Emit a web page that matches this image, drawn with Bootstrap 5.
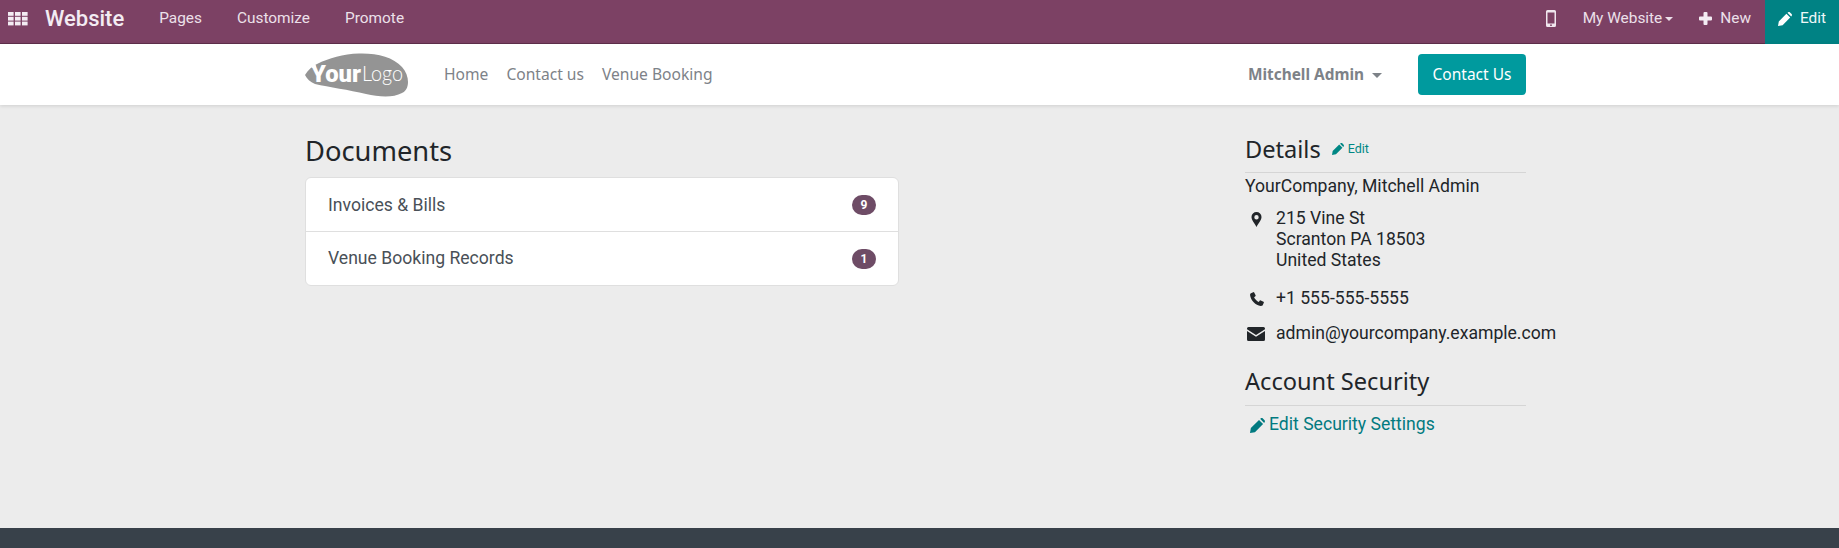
<!DOCTYPE html>
<html lang="en">
<head>
<meta charset="utf-8">
<title>Documents</title>
<link href="https://cdn.jsdelivr.net/npm/bootstrap@5.3.0/dist/css/bootstrap.min.css" rel="stylesheet">
<style>
html,body{height:548px;overflow:hidden}
body{background:#ececec;font-family:Roboto,sans-serif;font-size:17.6px;color:#212529;display:flex;flex-direction:column}
.topbar{height:44px;background:#7c4164;border-bottom:1px solid #5f2f4c;color:#f0e6ee;font-size:15.4px;flex:none}
.topbar a{color:#ece0ea;text-decoration:none}
.topgroup{padding-bottom:6px}
.appgrid{width:20px;margin-left:8px;margin-right:17px}
.topbar a.brandname{font-size:22px;font-weight:500;color:#f3ecf3;margin-right:35px}
.topitem{margin-right:35px}
.phoneicon{margin-right:27px}
.topbar a.sitepick{margin-right:26px}
.topbar a.newlink{margin-right:14px}
.plusicon{margin-right:8px}
.topbar a.editbtn{background:#008284;width:74px;height:44px;color:#eef8f8;padding-bottom:6px}
.penicon{margin-right:8px}
.smallcaret{display:inline-block;width:0;height:0;border-left:4px solid transparent;border-right:4px solid transparent;border-top:4px solid currentColor;vertical-align:middle;margin-left:3px}
.sitehead{height:61px;background:#fff;box-shadow:0 1px 4px rgba(0,0,0,.13);flex:none;position:relative}
.wrapin{width:1221px;margin-left:305px}
.sitenav{gap:18px;margin-left:34px}
.sitenav a{font-family:"Noto Sans",sans-serif;color:#7d8288;text-decoration:none;font-size:15.6px}
.usermenu{font-family:"Noto Sans",sans-serif;font-weight:700;font-size:15.4px;color:#7d8288;margin-right:36px}
.caretdown{display:inline-block;width:0;height:0;border-left:5px solid transparent;border-right:5px solid transparent;border-top:5px solid currentColor;vertical-align:middle;margin-left:8px}
.ctabtn{background:#009a9e;color:#fff;border:0;border-radius:4px;height:41px;width:108px;font-family:"Noto Sans",sans-serif;font-size:15.5px;padding:0;line-height:41px;text-align:center;text-decoration:none}
.mainarea{flex:1 1 auto}
.leftcol{width:594px}
.rightcol{width:281px}
.headline{font-family:"Noto Sans",sans-serif;font-weight:400;color:#212529;margin:0}
.headdocs{font-size:27.3px;line-height:32px;margin-top:30px;margin-bottom:10px}
.doclist{border-radius:6px;border:1px solid #dfdfdf;background:#fff;font-size:17.6px}
.docitem{height:54px;padding:0 22px;color:#495057;text-decoration:none;border-bottom:1px solid #dfdfdf}
.docitem:last-child{border-bottom:0;height:53px}
.doclabel{padding-top:1px}
.countpill{background:#6e4c66;color:#fff;font-size:12px;font-weight:700;border-radius:10px;width:24px;height:20px;text-align:center;line-height:20px}
.dethead{border-bottom:1px solid #d5d5d5;height:46px;margin-top:22px;padding-bottom:1px}
.dethead2{border-bottom:1px solid #d5d5d5;height:42px;margin-top:20px;padding-bottom:7px}
.headsmall{font-size:23.6px;line-height:34px}
.tinyedit{font-size:12.5px;color:#008784;text-decoration:none;margin-left:11px}
.infolines{line-height:21px}
.companyline{margin-top:3px}
.addrline{margin-top:11px}
.phoneline{margin-top:17px}
.mailline{margin-top:14px}
.infoicon{width:31px;flex:none;padding-left:6px}
.infoicon.wideicon{padding-left:2px}
.infoicon.midicon{padding-left:5px}
.secedit{color:#017a80;text-decoration:none;line-height:21px;margin-top:8px}
.secicon{margin-left:5px;margin-right:4px}
.footband{height:20px;background:#38414a;flex:none}
</style>
</head>
<body>
<div class="topbar d-flex justify-content-between">
  <div class="d-flex align-items-center topgroup">
    <svg class="appgrid" viewBox="0 0 20 15" height="15" aria-hidden="true"><g fill="#f3ecf3"><rect x="0" y="1" width="5.600" height="3.800"/><rect x="7" y="1" width="5.600" height="3.800"/><rect x="14" y="1" width="5.600" height="3.800"/><rect x="0" y="5.800" width="5.600" height="3.800"/><rect x="7" y="5.800" width="5.600" height="3.800"/><rect x="14" y="5.800" width="5.600" height="3.800"/><rect x="0" y="10.600" width="5.600" height="3.800"/><rect x="7" y="10.600" width="5.600" height="3.800"/><rect x="14" y="10.600" width="5.600" height="3.800"/></g></svg>
    <a class="brandname" href="#">Website</a>
    <a class="topitem" href="#">Pages</a>
    <a class="topitem" href="#">Customize</a>
    <a class="topitem" href="#">Promote</a>
  </div>
  <div class="d-flex">
    <div class="d-flex align-items-center topgroup">
      <svg class="phoneicon" width="10" height="17" viewBox="0 0 10 17" aria-hidden="true"><path fill="#f0e6ee" fill-rule="evenodd" d="M1.500 0h7A1.500 1.500 0 0 1 10 1.500v14A1.500 1.500 0 0 1 8.500 17h-7A1.500 1.500 0 0 1 0 15.500v-14A1.500 1.500 0 0 1 1.500 0zM1.500 2.500v11h7v-11zM5 14.300a.9.9 0 1 0 0 1.800.9.9 0 0 0 0-1.800z"/></svg>
      <a href="#" class="sitepick">My Website<span class="smallcaret"></span></a>
      <a href="#" class="newlink d-flex align-items-center"><svg class="plusicon" width="13" height="13" viewBox="0 0 13 13" aria-hidden="true"><path fill="#f3ecf3" d="M4.500 1a1 1 0 0 1 1-1h2a1 1 0 0 1 1 1v3.500H12a1 1 0 0 1 1 1v2a1 1 0 0 1-1 1H8.500V12a1 1 0 0 1-1 1h-2a1 1 0 0 1-1-1V8.500H1a1 1 0 0 1-1-1v-2a1 1 0 0 1 1-1h3.500z"/></svg>New</a>
    </div>
    <a href="#" class="editbtn d-flex align-items-center justify-content-center"><svg class="penicon" width="14" height="14" viewBox="0 0 14 14" aria-hidden="true"><path fill="#fff" d="M0 14l.8-4.600L8.400 1.800l3.800 3.800-7.600 7.600zM9.400.8l.6-.4c.6-.5 1.400-.5 2 0L13.600 2c.5.600.5 1.400 0 2l-.4.600z"/></svg>Edit</a>
  </div>
</div>
<header class="sitehead d-flex align-items-center">
  <div class="wrapin d-flex align-items-center">
    <svg width="105" height="44" viewBox="0 0 105 44" aria-hidden="true"><path fill="#949494" d="M0 22C3 17 7 13 12 11 24 5 38 1 54 .5 72 0 88 4 97 14c8 9 8 22 0 26-9 5-23 4-36 1C44 37 24 34 10 31 5 29 2 26 0 22z"/><path fill="#fff" d="M3 9l7 1 1 4-4 1z"/><text x="6" y="29" fill="#fff" font-family="Roboto,sans-serif" font-weight="900" font-size="23" textLength="50" lengthAdjust="spacingAndGlyphs">Your</text><text x="57" y="28" fill="#fff" font-family="Lato,sans-serif" font-weight="300" font-size="22" textLength="41" lengthAdjust="spacingAndGlyphs">Logo</text></svg>
    <nav class="sitenav d-flex flex-grow-1"><a href="#">Home</a><a href="#">Contact us</a><a href="#">Venue Booking</a></nav>
    <span class="usermenu">Mitchell Admin<span class="caretdown"></span></span>
    <a class="ctabtn" href="#">Contact Us</a>
  </div>
</header>
<main class="mainarea">
  <div class="wrapin d-flex justify-content-between">
    <div class="leftcol">
      <h3 class="headline headdocs">Documents</h3>
      <div class="doclist list-group">
        <a href="#" class="docitem d-flex align-items-center justify-content-between"><span class="doclabel">Invoices &amp; Bills</span><span class="countpill">9</span></a>
        <a href="#" class="docitem d-flex align-items-center justify-content-between"><span>Venue Booking Records</span><span class="countpill">1</span></a>
      </div>
    </div>
    <div class="rightcol">
      <div class="dethead d-flex align-items-center"><h4 class="headline headsmall">Details</h4><a class="tinyedit" href="#"><svg width="12" height="12" viewBox="0 0 14 14" aria-hidden="true" class="me-1"><path fill="#008784" d="M0 14l.8-4.600L8.400 1.800l3.800 3.800-7.600 7.600zM9.400.8l.6-.4c.6-.5 1.400-.5 2 0L13.600 2c.5.600.5 1.400 0 2l-.4.600z"/></svg>Edit</a></div>
      <div class="infolines companyline">YourCompany, Mitchell Admin</div>
      <div class="d-flex infolines addrline"><span class="infoicon"><svg width="11" height="15" viewBox="0 0 10 15" aria-hidden="true"><path fill="#212529" fill-rule="evenodd" d="M5 0a5 5 0 0 1 5 5c0 3-3.500 7-5 10C3.500 12 0 8 0 5a5 5 0 0 1 5-5zm0 3a2.200 2.200 0 1 0 0 4.400A2.200 2.200 0 0 0 5 3z"/></svg></span><div>215 Vine St<br>Scranton PA 18503<br>United States</div></div>
      <div class="d-flex infolines phoneline"><span class="infoicon midicon"><svg width="14" height="14" viewBox="0 0 14 14" aria-hidden="true"><path fill="#212529" d="M3.200.2 1 1.200C.2 1.600 0 2.500.1 3.300c.5 5 5.600 10.200 10.600 10.600.8.100 1.700-.1 2.100-.9l1-2.200a.8.8 0 0 0-.3-1L10.800 8.400a.8.8 0 0 0-1 .2l-1 1.300C7 9.100 4.900 7 4.100 5.200l1.300-1a.8.8 0 0 0 .2-1L4.200.5a.8.8 0 0 0-1-.3z"/></svg></span><div>+1 555-555-5555</div></div>
      <div class="d-flex infolines mailline text-nowrap"><span class="infoicon wideicon"><svg width="18" height="14" viewBox="0 0 18 14" aria-hidden="true"><path fill="#212529" d="M1.500 0h15A1.500 1.500 0 0 1 18 1.500v.7L9 8 0 2.200v-.7A1.500 1.500 0 0 1 1.500 0zM0 4l9 5.800L18 4v8.500a1.500 1.500 0 0 1-1.500 1.500h-15A1.500 1.500 0 0 1 0 12.500z"/></svg></span><div>admin@yourcompany.example.com</div></div>
      <div class="dethead2 d-flex align-items-center"><h4 class="headline headsmall">Account Security</h4></div>
      <a class="secedit d-block" href="#"><svg class="secicon" width="15" height="15" viewBox="0 0 14 14" aria-hidden="true"><path fill="#017a80" d="M0 14l.8-4.600L8.400 1.800l3.800 3.800-7.600 7.600zM9.400.8l.6-.4c.6-.5 1.400-.5 2 0L13.600 2c.5.600.5 1.400 0 2l-.4.600z"/></svg>Edit Security Settings</a>
    </div>
  </div>
</main>
<footer class="footband"></footer>
<script src="https://cdn.jsdelivr.net/npm/bootstrap@5.3.0/dist/js/bootstrap.bundle.min.js"></script>
</body>
</html>
